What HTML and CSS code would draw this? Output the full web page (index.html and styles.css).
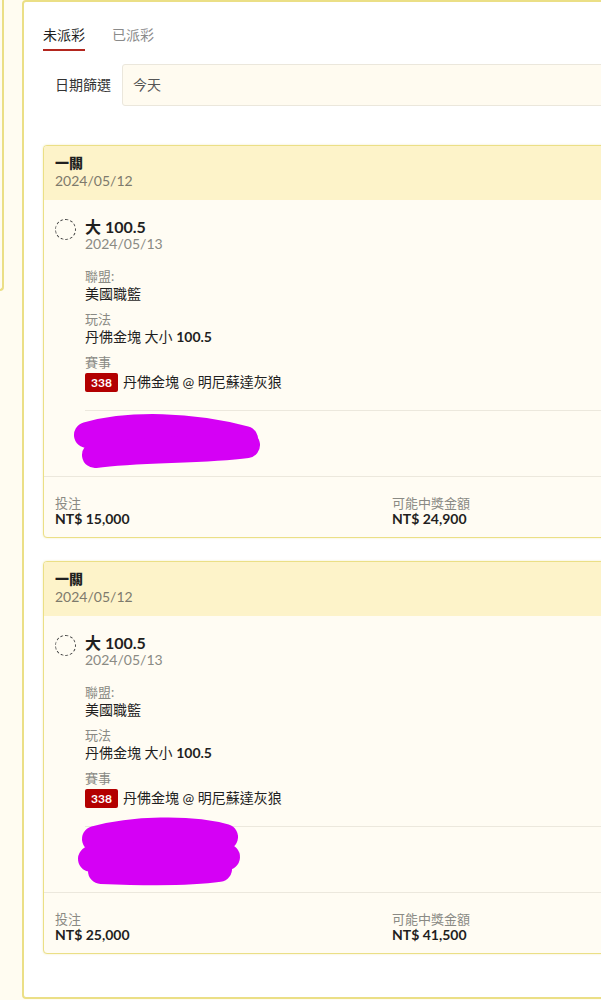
FILE: index.html
```html
<!DOCTYPE html>
<html lang="zh-Hant">

<head>
    <meta charset="UTF-8">
    <meta name="viewport" content="width=device-width, initial-scale=1.0">
    <title>注單</title>
    <link rel="stylesheet" href="styles.css">
</head>

<body>
    <div class="layout">
        <aside class="sidebar"></aside>

        <main class="panel">
            <nav class="tabs">
                <a class="tab active">未派彩</a>
                <a class="tab">已派彩</a>
            </nav>

            <div class="filter">
                <label class="filter-label">日期篩選</label>
                <div class="filter-input">今天</div>
            </div>

            <!-- 注單 1 -->
            <section class="ticket">
                <div class="ticket-head">
                    <div class="ticket-type">一關</div>
                    <div class="ticket-date">2024/05/12</div>
                </div>
                <div class="ticket-body">
                    <div class="pick">
                        <span class="pick-status"></span>
                        <div class="pick-main">
                            <div class="pick-title">大 100.5</div>
                            <div class="pick-date">2024/05/13</div>

                            <div class="fields">
                                <div class="field">
                                    <div class="field-label">聯盟:</div>
                                    <div class="field-value">美國職籃</div>
                                </div>
                                <div class="field">
                                    <div class="field-label">玩法</div>
                                    <div class="field-value">丹佛金塊 大小 <b>100.5</b></div>
                                </div>
                                <div class="field">
                                    <div class="field-label">賽事</div>
                                    <div class="field-value"><span class="game-no">338</span>丹佛金塊 @ 明尼蘇達灰狼</div>
                                </div>
                            </div>
                        </div>
                    </div>
                    <div class="redacted">
                        <svg width="200" height="64" viewBox="0 0 200 64">
                            <path d="M16 24 C60 12, 120 14, 174 28" />
                            <path d="M24 44 C70 38, 130 40, 176 34" />
                        </svg>
                    </div>
                </div>
                <div class="ticket-foot">
                    <div class="amount">
                        <div class="amount-label">投注</div>
                        <div class="amount-value">NT$ 15,000</div>
                    </div>
                    <div class="amount">
                        <div class="amount-label">可能中獎金額</div>
                        <div class="amount-value">NT$ 24,900</div>
                    </div>
                </div>
            </section>

            <!-- 注單 2 -->
            <section class="ticket">
                <div class="ticket-head">
                    <div class="ticket-type">一關</div>
                    <div class="ticket-date">2024/05/12</div>
                </div>
                <div class="ticket-body">
                    <div class="pick">
                        <span class="pick-status"></span>
                        <div class="pick-main">
                            <div class="pick-title">大 100.5</div>
                            <div class="pick-date">2024/05/13</div>

                            <div class="fields">
                                <div class="field">
                                    <div class="field-label">聯盟:</div>
                                    <div class="field-value">美國職籃</div>
                                </div>
                                <div class="field">
                                    <div class="field-label">玩法</div>
                                    <div class="field-value">丹佛金塊 大小 <b>100.5</b></div>
                                </div>
                                <div class="field">
                                    <div class="field-label">賽事</div>
                                    <div class="field-value"><span class="game-no">338</span>丹佛金塊 @ 明尼蘇達灰狼</div>
                                </div>
                            </div>
                        </div>
                    </div>
                    <div class="redacted">
                        <svg width="200" height="64" viewBox="0 0 200 64">
                            <path d="M24 12 C60 2, 120 0, 154 10" />
                            <path d="M20 32 C70 26, 120 28, 156 30" />
                            <path d="M30 44 C80 46, 120 46, 148 42" />
                        </svg>
                    </div>
                </div>
                <div class="ticket-foot">
                    <div class="amount">
                        <div class="amount-label">投注</div>
                        <div class="amount-value">NT$ 25,000</div>
                    </div>
                    <div class="amount">
                        <div class="amount-label">可能中獎金額</div>
                        <div class="amount-value">NT$ 41,500</div>
                    </div>
                </div>
            </section>
        </main>
    </div>
</body>

</html>
```

FILE: styles.css
```css
:root {
    --page-bg: #fffcf1;
    --border-yellow: #ebdf86;
    --head-yellow: #fdf3c9;
    --card-bg: #fffcf3;
    --line: #ece8dd;
    --text: #1f1f1f;
    --muted: #8a8a84;
    --red: #b3261e;
}

* {
    box-sizing: border-box;
    margin: 0;
    padding: 0;
}

html,
body {
    overflow: hidden;
}

body {
    font-family: 'Lato', 'Noto Sans CJK TC', sans-serif;
    background: var(--page-bg);
    color: var(--text);
    font-size: 14px;
    line-height: 1.3;
}

.layout {
    display: flex;
    align-items: flex-start;
    width: 800px;
}

.sidebar {
    width: 4px;
    height: 291px;
    border-right: 2px solid var(--border-yellow);
    border-bottom: 2px solid var(--border-yellow);
    border-bottom-right-radius: 5px;
    margin-right: 18px;
    flex-shrink: 0;
}

.panel {
    width: 740px;
    height: 999px;
    background: #fff;
    border: 2px solid var(--border-yellow);
    border-radius: 4px;
    padding: 23px 19px 0;
    flex-shrink: 0;
}

/* tabs */
.tabs {
    display: flex;
    gap: 27px;
}

.tab {
    font-size: 14px;
    line-height: 20px;
    padding-bottom: 4px;
    color: #8a8a8a;
    border-bottom: 2px solid transparent;
}

.tab.active {
    color: var(--text);
    border-bottom-color: var(--red);
}

/* date filter */
.filter {
    display: flex;
    align-items: center;
    gap: 11px;
    margin-top: 13px;
    padding-left: 12px;
}

.filter-label {
    font-size: 14px;
    color: #333;
}

.filter-input {
    flex: 1;
    height: 42px;
    line-height: 40px;
    padding: 0 10px;
    background: #fffbf0;
    border: 1px solid #ebe7dc;
    border-radius: 3px;
    color: #555;
    font-size: 14px;
}

/* ticket card */
.ticket {
    margin-top: 39px;
    border: 1px solid var(--border-yellow);
    border-radius: 4px;
    background: var(--card-bg);
    box-shadow: 0 0 2px rgba(230, 215, 110, 0.5);
    overflow: hidden;
}

.ticket + .ticket {
    margin-top: 23px;
}

.ticket-head {
    background: var(--head-yellow);
    padding: 8px 11px 10px;
}

.ticket-type {
    font-weight: 900;
    line-height: 18px;
}

.ticket-date {
    color: #7d7a6c;
    line-height: 18px;
}

.ticket-body {
    padding: 18px 11px 0;
}

.pick {
    display: flex;
    gap: 9px;
}

.pick-status {
    width: 21px;
    height: 21px;
    margin-top: 1px;
    border: 1px dashed #444;
    border-radius: 50%;
    flex-shrink: 0;
}

.pick-main {
    flex: 1;
    padding-bottom: 18px;
}

.pick-title {
    font-size: 16px;
    font-weight: 700;
    line-height: 18px;
}

.pick-date {
    color: var(--muted);
    line-height: 16px;
}

.fields {
    display: flex;
    flex-direction: column;
    gap: 7px;
    margin-top: 15px;
}

.field-label {
    font-size: 13px;
    color: var(--muted);
    line-height: 18px;
}

.field-value {
    line-height: 18px;
}

.field-value b {
    font-weight: 700;
}

.game-no {
    display: inline-block;
    background: #b30000;
    color: #fff;
    font-size: 12px;
    font-weight: 700;
    line-height: 19px;
    padding: 0 6px;
    border-radius: 2px;
    margin: 2px 5px 0 0;
}

.redacted {
    height: 66px;
    margin-left: 30px;
    border-top: 1px solid var(--line);
}

.redacted svg {
    display: block;
    margin-left: -14px;
    overflow: visible;
}

.redacted path {
    fill: none;
    stroke: #d500f5;
    stroke-width: 26;
    stroke-linecap: round;
}

.ticket-foot {
    display: grid;
    grid-template-columns: 1fr 1fr;
    border-top: 1px solid var(--line);
    padding: 19px 11px 11px;
}

.amount-label {
    font-size: 13px;
    color: var(--muted);
    line-height: 15px;
}

.amount-value {
    font-weight: 700;
    line-height: 15px;
}
```
